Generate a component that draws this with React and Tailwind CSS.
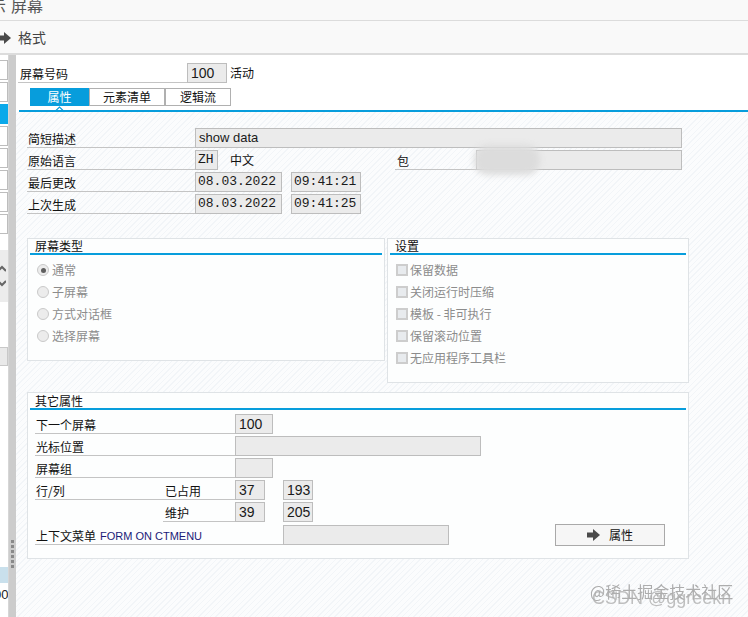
import { useState } from "react";

const BLUE = "bg-[#079ddc]";

function Arrow({ className }) {
  return (
    <svg width="13" height="12" viewBox="0 0 13 12" className={className}>
      <rect x="0" y="3.5" width="7" height="5" fill="#4a4a4a" />
      <polygon points="6,0 13,6 6,12" fill="#4a4a4a" />
    </svg>
  );
}

function Input({ w, children, mono, className = "" }) {
  return (
    <div
      className={`${w} h-[20px] shrink-0 bg-[#ebebeb] border border-[#bdbdbd] flex items-center pl-[2px] text-[#1a1a1a] ${
        mono
          ? "font-['Liberation_Mono',monospace] text-[13px]"
          : "font-['Liberation_Sans',sans-serif] text-[13px]"
      } ${className}`}
    >
      {children}
    </div>
  );
}

function Label({ w, children, className = "" }) {
  return (
    <div
      className={`${w} h-[20px] shrink-0 border-b border-[#c4c4c4] flex items-end pb-[1px] pl-[1px] leading-[14px] ${className}`}
    >
      {children}
    </div>
  );
}

function GroupTitle({ title }) {
  return (
    <>
      <div className="h-[14px] pl-[7px] leading-[14px] text-[#111]">{title}</div>
      <div className={`h-[2px] mx-[2px] ${BLUE}`} />
    </>
  );
}

function Radio({ checked, children }) {
  return (
    <div className="h-[22px] flex items-center text-[#8c8c8c]">
      <div className="w-[12px] h-[12px] rounded-full border border-[#c9c9c9] bg-[#ececec] flex items-center justify-center">
        {checked ? <div className="w-[5px] h-[5px] rounded-full bg-[#5f5f5f]" /> : null}
      </div>
      <span className="ml-[3px]">{children}</span>
    </div>
  );
}

function Check({ children }) {
  return (
    <div className="h-[22px] flex items-center text-[#8c8c8c]">
      <div className="w-[12px] h-[12px] border-2 border-[#cdcdcd] bg-[#e8ebee]" />
      <span className="ml-[2px]">{children}</span>
    </div>
  );
}

function Sidebar() {
  const boxes = [0, 1, 2, 3, 4, 5, 6, 7];
  return (
    <div className="w-[9px] shrink-0 flex flex-col bg-white border-r border-[#d6d6d6]">
      <div className="h-[5px]" />
      <div className="flex flex-col gap-[2px]">
        {boxes.map((b) => (
          <div
            key={b}
            className={`h-[20px] w-[8px] border border-l-0 ${
              b === 2 ? "bg-[#0aa9ea] border-[#0aa9ea]" : "bg-white border-[#bdbdbd]"
            }`}
          />
        ))}
      </div>
      <div className="h-[16px]" />
      <div className="h-[52px] bg-[#ececec] flex flex-col items-start justify-center gap-[6px] overflow-hidden">
        <svg width="9" height="8" viewBox="0 0 9 8" className="-ml-[3px]">
          <path d="M1 6 L5 2 L9 6" stroke="#666" strokeWidth="2" fill="none" />
        </svg>
        <svg width="9" height="8" viewBox="0 0 9 8" className="-ml-[3px]">
          <path d="M1 2 L5 6 L9 2" stroke="#666" strokeWidth="2" fill="none" />
        </svg>
      </div>
      <div className="h-[45px]" />
      <div className="h-[19px] bg-[#e9e9e9] border border-l-0 border-[#c8c8c8]" />
      <div className="flex-1" />
      <div className="h-[16px] bg-[#c9e0ec]" />
      <div className="h-[5px]" />
      <div className="h-[14px] overflow-hidden font-['Liberation_Sans',sans-serif] text-[13px] leading-[14px] text-[#222] -ml-[6px]">
        00
      </div>
      <div className="h-[15px]" />
    </div>
  );
}

function Divider() {
  return (
    <div className="w-[7px] shrink-0 bg-[#cccccc] flex flex-col items-center">
      <div className="h-[485px]" />
      <div className="flex flex-col gap-[2px]">
        {[0, 1, 2, 3, 4, 5].map((d) => (
          <div key={d} className="w-[3px] h-[3px] bg-[#8a8a8a]" />
        ))}
      </div>
    </div>
  );
}

export default function App() {
  const [tab, setTab] = useState(1);

  return (
    <div className="w-[748px] h-[617px] overflow-hidden relative bg-white flex flex-col font-['Noto_Sans_CJK_SC',sans-serif] text-[12px] text-[#111]">
      {/* title bar */}
      <div className="h-[21px] shrink-0 bg-[#f9f9f9] border-b border-[#dcdcdc] overflow-hidden flex items-start text-[16px] text-[#555]">
        <span className="-ml-[10px] -mt-[4px] leading-[19px]">示</span>
        <span className="ml-[5px] -mt-[4px] leading-[19px]">屏幕</span>
      </div>
      {/* toolbar */}
      <div className="h-[34px] shrink-0 bg-[#f9f9f9] border-b-2 border-[#dcdcdc] flex items-center text-[14px] text-[#444]">
        <Arrow className="-ml-[2px] mt-[1px]" />
        <span className="ml-[7px]">格式</span>
      </div>

      <div className="flex flex-1 min-h-0">
        <Sidebar />
        <Divider />

        <div className="flex-1 flex flex-col min-w-0">
          {/* header */}
          <div className="h-[55px] shrink-0 bg-white flex flex-col">
            <div className="flex items-center pl-[2px] pt-[8px]">
              <Label w="w-[169px]" className="pl-[2px]">屏幕号码</Label>
              <Input w="w-[40px]" className="text-[14px] pl-[3px]">100</Input>
              <span className="ml-[3px]">活动</span>
            </div>
            <div className="flex pl-[14px] mt-[5px]">
              {["属性", "元素清单", "逻辑流"].map((t, i) => (
                <button
                  key={t}
                  onClick={() => setTab(i + 1)}
                  className={`h-[18px] flex items-center justify-center leading-[14px] ${
                    i === 0 ? "w-[59px]" : i === 1 ? "w-[76px]" : "w-[66px]"
                  } ${
                    tab === i + 1
                      ? "bg-[#079ddc] text-white"
                      : "bg-white text-[#111] border border-[#b0b0b0]"
                  }`}
                >
                  {t}
                </button>
              ))}
            </div>
            <div className="relative h-[4px]">
              <svg width="9" height="5" viewBox="0 0 9 5" className="absolute left-[39px] top-[0px]">
                <path d="M0.5 5 L4.5 1 L8.5 5" stroke="#079ddc" strokeWidth="1.2" fill="none" />
              </svg>
            </div>
          </div>
          <div className={`h-[2px] ml-[3px] shrink-0 ${BLUE}`} />

          {/* body */}
          <div className="flex-1 pl-[11px] pt-[16px] bg-[repeating-linear-gradient(-45deg,#f2f5f8_0px,#f2f5f8_1px,#fbfcfd_1px,#fbfcfd_4px)]">
            <div className="flex flex-col gap-[2px]">
              <div className="flex">
                <Label w="w-[168px]">简短描述</Label>
                <Input w="w-[487px]" className="pl-[3px] text-[13px]">show data</Input>
              </div>
              <div className="flex items-center">
                <Label w="w-[168px]">原始语言</Label>
                <Input w="w-[23px]" mono>
                  ZH
                </Input>
                <span className="w-[177px] pl-[12px]">中文</span>
                <Label w="w-[81px]" className="pl-[2px]">包</Label>
                <div className="relative">
                  <Input w="w-[206px]" />
                  <div className="absolute left-[-2px] top-[-5px] w-[66px] h-[30px] rounded-[14px] bg-[#dcdcdc] blur-[3px]" />
                </div>
              </div>
              <div className="flex">
                <Label w="w-[168px]">最后更改</Label>
                <Input w="w-[87px]" mono>
                  08.03.2022
                </Input>
                <Input w="w-[70px]" mono className="ml-[9px]">
                  09:41:21
                </Input>
              </div>
              <div className="flex">
                <Label w="w-[168px]">上次生成</Label>
                <Input w="w-[87px]" mono>
                  08.03.2022
                </Input>
                <Input w="w-[70px]" mono className="ml-[9px]">
                  09:41:25
                </Input>
              </div>
            </div>

            <div className="flex items-start gap-[2px] mt-[24px]">
              <div className="w-[358px] h-[123px] border border-[#dfe3e6] bg-[#fdfefe] flex flex-col">
                <GroupTitle title="屏幕类型" />
                <div className="pl-[9px] pt-[4px] flex flex-col">
                  <Radio checked>通常</Radio>
                  <Radio>子屏幕</Radio>
                  <Radio>方式对话框</Radio>
                  <Radio>选择屏幕</Radio>
                </div>
              </div>
              <div className="w-[302px] h-[145px] border border-[#dfe3e6] bg-[#fdfefe] flex flex-col">
                <GroupTitle title="设置" />
                <div className="pl-[8px] pt-[4px] flex flex-col">
                  <Check>保留数据</Check>
                  <Check>关闭运行时压缩</Check>
                  <Check>模板 - 非可执行</Check>
                  <Check>保留滚动位置</Check>
                  <Check>无应用程序工具栏</Check>
                </div>
              </div>
            </div>

            <div className="w-[662px] h-[167px] mt-[9px] border border-[#dfe3e6] bg-[#fdfefe] flex flex-col">
              <div className="h-[15px] pl-[7px] leading-[15px] text-[#111]">其它属性</div>
              <div className={`h-[2px] mx-[2px] ${BLUE}`} />
              <div className="pl-[7px] pt-[4px] flex flex-col gap-[2px]">
                <div className="flex">
                  <Label w="w-[200px]">下一个屏幕</Label>
                  <Input w="w-[38px]" className="pl-[3px] text-[14px]">100</Input>
                </div>
                <div className="flex">
                  <Label w="w-[200px]">光标位置</Label>
                  <Input w="w-[246px]" />
                </div>
                <div className="flex">
                  <Label w="w-[200px]">屏幕组</Label>
                  <Input w="w-[38px]" />
                </div>
                <div className="flex">
                  <Label w="w-[200px]">
                    <span className="w-[129px]">行/列</span>
                    <span>已占用</span>
                  </Label>
                  <Input w="w-[30px]" className="pl-[3px] text-[14px]">37</Input>
                  <Input w="w-[30px]" className="ml-[18px] pl-[3px] text-[14px]">193</Input>
                </div>
                <div className="flex">
                  <Label w="w-[72px]" className="ml-[128px] pl-[2px]">维护</Label>
                  <Input w="w-[30px]" className="pl-[3px] text-[14px]">39</Input>
                  <Input w="w-[30px]" className="ml-[18px] pl-[3px] text-[14px]">205</Input>
                </div>
                <div className="flex items-center">
                  <Label w="w-[248px]">
                    上下文菜单
                    <span className="ml-[4px] font-['Liberation_Sans',sans-serif] text-[11px] text-[#1b1b78]">
                      FORM ON CTMENU
                    </span>
                  </Label>
                  <Input w="w-[166px]" />
                  <button className="ml-auto mr-[23px] w-[110px] h-[22px] border border-[#a9a9a9] bg-[#f6f6f6] flex items-center justify-center gap-[9px] text-[#111]">
                    <Arrow />
                    <span>属性</span>
                  </button>
                </div>
              </div>
            </div>
          </div>
        </div>
      </div>

      {/* watermark */}
      <div className="absolute left-[590px] top-[582px] text-[16px] leading-[18px] text-[#9a9a9a] opacity-80">
        @稀土掘金技术社区
      </div>
      <div className="absolute left-[592px] top-[588px] font-['Liberation_Sans',sans-serif] text-[18px] leading-[20px] text-[#b0b0b0] opacity-80">
        CSDN @ggreekn
      </div>
    </div>
  );
}
